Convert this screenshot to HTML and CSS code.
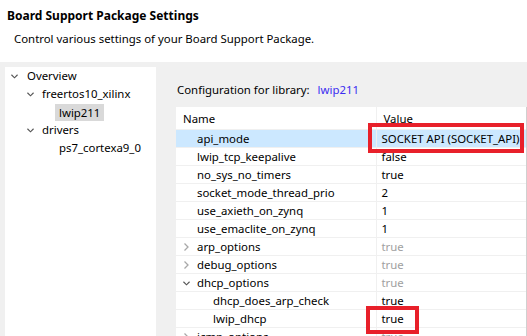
FILE: index.html
```html
<!DOCTYPE html>
<html lang="en">
<head>
  <meta charset="UTF-8">
  <title>Board Support Package Settings</title>
  <link rel="stylesheet" href="styles.css">
</head>
<body>
  <div class="page-header">
    <h1>Board Support Package Settings</h1>
    <p>Control various settings of your Board Support Package.</p>
  </div>
  <div class="main">
    <div class="tree">
      <div class="node lvl1"><svg class="chev" viewBox="0 0 8 5"><polyline points="0.5,0.5 4,4 7.5,0.5"/></svg>Overview</div>
      <div class="node lvl2"><svg class="chev" viewBox="0 0 8 5"><polyline points="0.5,0.5 4,4 7.5,0.5"/></svg>freertos10_xilinx</div>
      <div class="node lvl3"><span class="selected">lwip211</span></div>
      <div class="node lvl2"><svg class="chev" viewBox="0 0 8 5"><polyline points="0.5,0.5 4,4 7.5,0.5"/></svg>drivers</div>
      <div class="node lvl3">ps7_cortexa9_0</div>
    </div>
    <div class="config">
      <div class="config-label">Configuration for library: <span class="lib">lwip211</span></div>
      <div class="table-wrap">
        <table>
          <tr class="head"><td class="name">Name</td><td class="value">Value</td></tr>
          <tr class="active"><td class="name">api_mode</td><td class="value">SOCKET API (SOCKET_API)</td></tr>
          <tr><td class="name">lwip_tcp_keepalive</td><td class="value">false</td></tr>
          <tr><td class="name">no_sys_no_timers</td><td class="value">true</td></tr>
          <tr><td class="name">socket_mode_thread_prio</td><td class="value">2</td></tr>
          <tr><td class="name">use_axieth_on_zynq</td><td class="value">1</td></tr>
          <tr><td class="name">use_emaclite_on_zynq</td><td class="value">1</td></tr>
          <tr class="group"><td class="name"><svg class="arrow" viewBox="0 0 5 8"><polyline points="0.5,0.5 4,4 0.5,7.5"/></svg>arp_options</td><td class="value">true</td></tr>
          <tr class="group"><td class="name"><svg class="arrow" viewBox="0 0 5 8"><polyline points="0.5,0.5 4,4 0.5,7.5"/></svg>debug_options</td><td class="value">true</td></tr>
          <tr class="group open"><td class="name"><svg class="chev" viewBox="0 0 8 5"><polyline points="0.5,0.5 4,4 7.5,0.5"/></svg>dhcp_options</td><td class="value">true</td></tr>
          <tr class="child"><td class="name">dhcp_does_arp_check</td><td class="value">true</td></tr>
          <tr class="child"><td class="name">lwip_dhcp</td><td class="value">true</td></tr>
          <tr class="group"><td class="name"><svg class="arrow" viewBox="0 0 5 8"><polyline points="0.5,0.5 4,4 0.5,7.5"/></svg>icmp_options</td><td class="value">true</td></tr>
        </table>
        <div class="mark mark-api"></div>
        <div class="mark mark-dhcp"></div>
      </div>
    </div>
  </div>
</body>
</html>
```

FILE: styles.css
```css
html, body {
  margin: 0;
  padding: 0;
  height: 336px;
  overflow: hidden;
}

body {
  font-family: 'Noto Sans', 'Open Sans', sans-serif;
  font-size: 11.4px;
  color: #000;
  background: #f0f0f0;
}

.page-header {
  background: #fff;
  height: 62px;
  box-sizing: border-box;
  padding: 7px 0 0 7px;
}

.page-header h1 {
  margin: 0;
  font-size: 12px;
  font-weight: bold;
  line-height: 18px;
}

.page-header p {
  margin: 6px 0 0 7px;
  line-height: 16px;
}

.main {
  display: flex;
  height: 274px;
  overflow: hidden;
}

.tree {
  background: #fff;
  width: 151px;
  margin: 5px 0 0 5px;
}

.node {
  height: 18px;
  line-height: 18px;
  display: flex;
  align-items: center;
  white-space: nowrap;
}

.chev {
  width: 7px;
  height: 5px;
  fill: none;
  stroke: #555;
  stroke-width: 1.3;
}

.lvl1 { padding-left: 6px; }
.lvl1 .chev { margin-right: 9px; }
.lvl2 { padding-left: 22px; }
.lvl2 .chev { margin-right: 8px; }
.lvl3 { padding-left: 54px; }
.lvl3 .selected { margin-left: -4px; }

.selected {
  background: #d9d9d9;
  padding: 0 4px 0 4px;
  line-height: 17px;
}

.config {
  padding-left: 20px;
  flex: 1;
}

.config-label {
  margin-top: 19px;
  line-height: 18px;
  padding-left: 1px;
}

.lib {
  color: #3c2df0;
  margin-left: 5px;
}

.table-wrap {
  position: relative;
  margin-top: 8px;
  width: 350px;
  background: #fff;
  border-right: 1px solid #d0d0d0;
}

table {
  border-collapse: collapse;
  width: 100%;
}

td {
  height: 17px;
  padding: 0;
  border-bottom: 1px solid #f0f0f0;
  white-space: nowrap;
  line-height: 17px;
}

td.name {
  width: 200px;
  padding-left: 21px;
  box-sizing: border-box;
  border-right: 1px solid #f0f0f0;
}

td.value {
  padding-left: 5px;
}

tr.head td {
  height: 22px;
}

tr.head td.name {
  padding-left: 7px;
}

tr.head td.value {
  padding-left: 7px;
}

tr.active td {
  background: #cce8ff;
}

tr.group td.value {
  color: #a0a0a0;
}

tr.group td.name {
  position: relative;
}

tr.group svg {
  position: absolute;
  top: 5px;
}

.arrow {
  left: 8px;
  width: 5px;
  height: 8px;
  fill: none;
  stroke: #a8a8a8;
  stroke-width: 1.3;
}

tr.group .chev {
  left: 7px;
  top: 7px;
  stroke: #555;
}

tr.child td.name {
  padding-left: 37px;
}

.mark {
  position: absolute;
  border: 4px solid #e8202a;
  box-sizing: border-box;
}

.mark-api {
  left: 192px;
  top: 16px;
  width: 156px;
  height: 30px;
}

.mark-dhcp {
  left: 190px;
  top: 199px;
  width: 53px;
  height: 28px;
}
```
